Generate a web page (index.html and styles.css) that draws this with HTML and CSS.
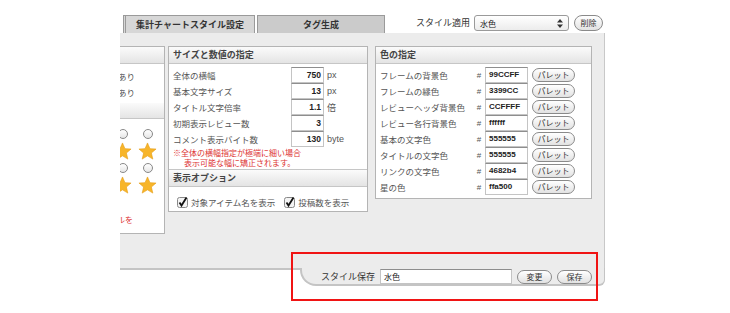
FILE: index.html
```html
<!DOCTYPE html>
<html lang="ja">
<head>
    <meta charset="UTF-8">
    <title>集計チャートスタイル設定</title>
    <link rel="stylesheet" href="styles.css">
</head>
<body>
<div class="stage">
    <div class="editor">
        <div class="topbar">
            <div class="tab active">集計チャートスタイル設定</div>
            <div class="tab">タグ生成</div>
            <div class="apply">
                <span class="apply-label">スタイル適用</span>
                <div class="select">
                    <span>水色</span>
                    <svg class="arrows" width="6" height="9" viewBox="0 0 6 9"><path d="M3 0 L6 3.5 H0 Z M3 9 L6 5.5 H0 Z" fill="#333"/></svg>
                </div>
                <button class="pill del">削除</button>
            </div>
        </div>

        <div class="panel">
            <!-- left column, mostly scrolled out of view -->
            <div class="box box-left">
                <div class="box-head">&nbsp;</div>
                <div class="left-rows">
                    <div class="left-row">あり</div>
                    <div class="left-row">あり</div>
                </div>
                <div class="box-head sub">&nbsp;</div>
                <div class="star-grid">
                    <div class="cell"><span class="radio"></span></div>
                    <div class="cell"><span class="radio"></span></div>
                    <div class="cell star-cell"><svg class="star" viewBox="0 0 20 20"><path d="M10 1 L12.6 7 L19 7.4 L14.1 11.6 L15.6 18 L10 14.6 L4.4 18 L5.9 11.6 L1 7.4 L7.4 7 Z"/></svg></div>
                    <div class="cell star-cell"><svg class="star" viewBox="0 0 20 20"><path d="M10 1 L12.6 7 L19 7.4 L14.1 11.6 L15.6 18 L10 14.6 L4.4 18 L5.9 11.6 L1 7.4 L7.4 7 Z"/></svg></div>
                    <div class="cell"><span class="radio"></span></div>
                    <div class="cell"><span class="radio"></span></div>
                    <div class="cell star-cell"><svg class="star" viewBox="0 0 20 20"><path d="M10 1 L12.6 7 L19 7.4 L14.1 11.6 L15.6 18 L10 14.6 L4.4 18 L5.9 11.6 L1 7.4 L7.4 7 Z"/></svg></div>
                    <div class="cell star-cell"><svg class="star" viewBox="0 0 20 20"><path d="M10 1 L12.6 7 L19 7.4 L14.1 11.6 L15.6 18 L10 14.6 L4.4 18 L5.9 11.6 L1 7.4 L7.4 7 Z"/></svg></div>
                </div>
                <div class="left-note">星のスタイルを</div>
            </div>

            <div class="box box-size">
                <div class="box-head">サイズと数値の指定</div>
                <div class="rows">
                    <div class="row"><span class="label">全体の横幅</span><span class="num">750</span><span class="unit">px</span></div>
                    <div class="row"><span class="label">基本文字サイズ</span><span class="num">13</span><span class="unit">px</span></div>
                    <div class="row"><span class="label">タイトル文字倍率</span><span class="num">1.1</span><span class="unit">倍</span></div>
                    <div class="row"><span class="label">初期表示レビュー数</span><span class="num">3</span><span class="unit"></span></div>
                    <div class="row"><span class="label">コメント表示バイト数</span><span class="num">130</span><span class="unit">byte</span></div>
                </div>
                <div class="note">※全体の横幅指定が極端に細い場合<br><span class="indent">表示可能な幅に矯正されます。</span></div>
                <div class="box-head sub">表示オプション</div>
                <div class="checks">
                    <label class="check"><svg width="11" height="11" viewBox="0 0 11 11"><rect x="0.5" y="0.5" width="10" height="10" rx="2" fill="#f4f4f4" stroke="#888"/><path d="M2.5 5.5 L4.5 8.5 L9.5 0.5" fill="none" stroke="#111" stroke-width="1.8"/></svg>対象アイテム名を表示</label>
                    <label class="check"><svg width="11" height="11" viewBox="0 0 11 11"><rect x="0.5" y="0.5" width="10" height="10" rx="2" fill="#f4f4f4" stroke="#888"/><path d="M2.5 5.5 L4.5 8.5 L9.5 0.5" fill="none" stroke="#111" stroke-width="1.8"/></svg>投稿数を表示</label>
                </div>
            </div>

            <div class="box box-color">
                <div class="box-head">色の指定</div>
                <div class="rows">
                    <div class="row"><span class="label">フレームの背景色</span><span class="hash">#</span><span class="hex">99CCFF</span><button class="pill">パレット</button></div>
                    <div class="row"><span class="label">フレームの縁色</span><span class="hash">#</span><span class="hex">3399CC</span><button class="pill">パレット</button></div>
                    <div class="row"><span class="label">レビューヘッダ背景色</span><span class="hash">#</span><span class="hex">CCFFFF</span><button class="pill">パレット</button></div>
                    <div class="row"><span class="label">レビュー各行背景色</span><span class="hash">#</span><span class="hex">ffffff</span><button class="pill">パレット</button></div>
                    <div class="row"><span class="label">基本の文字色</span><span class="hash">#</span><span class="hex">555555</span><button class="pill">パレット</button></div>
                    <div class="row"><span class="label">タイトルの文字色</span><span class="hash">#</span><span class="hex">555555</span><button class="pill">パレット</button></div>
                    <div class="row"><span class="label">リンクの文字色</span><span class="hash">#</span><span class="hex">4682b4</span><button class="pill">パレット</button></div>
                    <div class="row"><span class="label">星の色</span><span class="hash">#</span><span class="hex">ffa500</span><button class="pill">パレット</button></div>
                </div>
            </div>
        </div>

        <div class="foot">
            <div class="foot-line"></div>
            <div class="savebar">
                <span class="save-label">スタイル保存</span>
                <span class="save-input">水色</span>
                <button class="pill save-btn">変更</button>
                <button class="pill save-btn">保存</button>
            </div>
        </div>
    </div>
    <div class="highlight"></div>
</div>
</body>
</html>
```

FILE: styles.css
```css
body {
    margin: 0;
    background: #fff;
    font-family: "Noto Sans CJK JP", "Noto Sans", sans-serif;
    color: #555;
}
.stage {
    position: relative;
    width: 730px;
    height: 313px;
    padding: 15px 0 0 120px;
    box-sizing: border-box;
}
.editor {
    width: 485px;
}

/* tabs + apply */
.topbar {
    display: flex;
    height: 18px;
}
.tab {
    box-sizing: border-box;
    height: 18px;
    margin-left: 2px;
    width: 128px;
    border: 1px solid #9a9a9a;
    border-bottom: none;
    background: #cbcbcb;
    color: #333;
    font-size: 9px;
    font-weight: bold;
    line-height: 17px;
    text-align: center;
}
.tab.active {
    margin-left: 3px;
    width: 132px;
    background: #d7d7d7;
    border-left: 3px double #9a9a9a;
}
.apply {
    margin-left: auto;
    display: flex;
    align-items: flex-start;
    padding-right: 2px;
}
.apply-label {
    font-size: 9px;
    color: #333;
    line-height: 16px;
    margin-right: 4px;
}
.select {
    box-sizing: border-box;
    width: 95px;
    height: 16px;
    border: 1px solid #9a9a9a;
    border-radius: 3px;
    background: linear-gradient(#fff, #ececec);
    display: flex;
    align-items: center;
    justify-content: space-between;
    padding: 0 5px 0 5px;
    font-size: 8px;
    color: #222;
}
.pill {
    box-sizing: border-box;
    height: 14px;
    padding: 0;
    border: 1px solid #8a8a8a;
    border-radius: 8px;
    background: linear-gradient(#fff, #e2e2e2);
    font-family: inherit;
    font-size: 8px;
    color: #333;
    line-height: 12px;
    text-align: center;
}
.pill.del {
    width: 29px;
    height: 16px;
    margin-left: 5px;
    line-height: 14px;
}

/* gray panel */
.panel {
    box-sizing: border-box;
    height: 235px;
    padding-top: 13px;
    display: flex;
    align-items: flex-start;
    background: #ececec;
    border-right: 1px solid #c8c8c8;
    overflow: hidden;
}
.box {
    box-sizing: border-box;
    flex: none;
    background: #fff;
    border: 1px solid #b4b4b4;
}
.box-head {
    height: 16px;
    line-height: 16px;
    padding-left: 4px;
    background: linear-gradient(#fbfbfb, #e4e4e4);
    border-bottom: 1px solid #c6c6c6;
    font-size: 9px;
    font-weight: bold;
    color: #444;
}
.box-head.sub {
    border-top: 1px solid #c6c6c6;
}

.box-left {
    width: 151px;
    height: 188px;
    margin-left: -106px;
}
.left-rows {
    padding: 4px 29px 3px 0;
}
.left-row {
    height: 16px;
    line-height: 16px;
    font-size: 8.5px;
    text-align: right;
}
.box-left .box-head.sub {
    border-top: none;
    height: 15px;
}
.star-grid {
    display: grid;
    grid-template-columns: 25px 25px;
    justify-content: end;
    padding: 7px 4px 0 0;
}
.cell {
    height: 16px;
    display: flex;
    align-items: center;
    justify-content: center;
}
.star-cell {
    height: 18px;
}
.radio {
    width: 8px;
    height: 8px;
    border: 1px solid #888;
    border-radius: 50%;
    background: linear-gradient(#fff, #e6e6e6);
}
.star {
    width: 19px;
    height: 19px;
    fill: #f7b52a;
    stroke: #e59a10;
    stroke-width: 0.6;
}
.left-note {
    margin-top: 20px;
    padding-right: 31px;
    text-align: right;
    font-size: 8px;
    color: #d33;
}

.box-size {
    width: 200px;
    height: 166px;
    margin-left: 3px;
}
.rows {
    padding-top: 3px;
}
.row {
    display: flex;
    align-items: center;
    height: 16px;
    font-size: 8.5px;
}
.label {
    flex: 1;
    padding-left: 4px;
    white-space: nowrap;
}
.num {
    box-sizing: border-box;
    width: 33px;
    height: 16px;
    border: 1px solid #c4c4c4;
    border-top-color: #8e8e8e;
    text-align: right;
    padding-right: 2px;
    font-family: "Liberation Sans", sans-serif;
    font-weight: bold;
    font-size: 8.5px;
    line-height: 14px;
    color: #222;
}
.unit {
    width: 40px;
    margin-left: 3px;
    font-family: "Liberation Sans", "Noto Sans CJK JP", sans-serif;
    font-size: 9px;
}
.note {
    height: 21px;
    padding: 1px 0 0 4px;
    font-size: 8px;
    line-height: 10px;
    color: #d33;
}
.indent {
    padding-left: 11px;
}
.checks {
    display: flex;
    padding: 7px 0 0 8px;
    gap: 9px;
}
.check {
    display: flex;
    align-items: center;
    gap: 3px;
    font-size: 8.5px;
    height: 16px;
}

.box-color {
    width: 217px;
    height: 153px;
    margin-left: 7px;
}
.box-color .row {
    padding-right: 16px;
}
.hash {
    width: 12px;
    text-align: center;
    font-family: "Liberation Sans", sans-serif;
    font-size: 8px;
}
.hex {
    box-sizing: border-box;
    width: 43px;
    height: 16px;
    border: 1px solid #c4c4c4;
    border-top-color: #8e8e8e;
    padding-left: 3px;
    font-family: "Liberation Sans", sans-serif;
    font-size: 8px;
    font-weight: bold;
    line-height: 14px;
    color: #222;
}
.box-color .pill {
    width: 43px;
    margin-left: 4px;
}

/* hanging save bar */
.foot {
    display: flex;
    align-items: flex-start;
}
.foot-line {
    width: 180px;
    border-top: 2px solid #c4c4c4;
}
.savebar {
    box-sizing: border-box;
    flex: 1;
    height: 18px;
    display: flex;
    align-items: flex-start;
    justify-content: flex-end;
    padding: 1px 12px 0 0;
    background: #ececec;
    border: 2px solid #c4c4c4;
    border-top: none;
    border-right-width: 1px;
    border-bottom-left-radius: 16px;
    border-bottom-right-radius: 6px;
}
.save-label {
    font-size: 9px;
    color: #333;
    line-height: 15px;
    margin-right: 5px;
}
.save-input {
    box-sizing: border-box;
    width: 132px;
    height: 15px;
    border: 1px solid #c4c4c4;
    border-top-color: #8e8e8e;
    background: #fff;
    padding-left: 3px;
    font-size: 8px;
    line-height: 13px;
    color: #222;
}
.save-btn {
    width: 35px;
    margin: 1px 0 0 5px;
}

.highlight {
    position: absolute;
    left: 291px;
    top: 252px;
    width: 303px;
    height: 45px;
    border: 2px solid #f01414;
}
```
